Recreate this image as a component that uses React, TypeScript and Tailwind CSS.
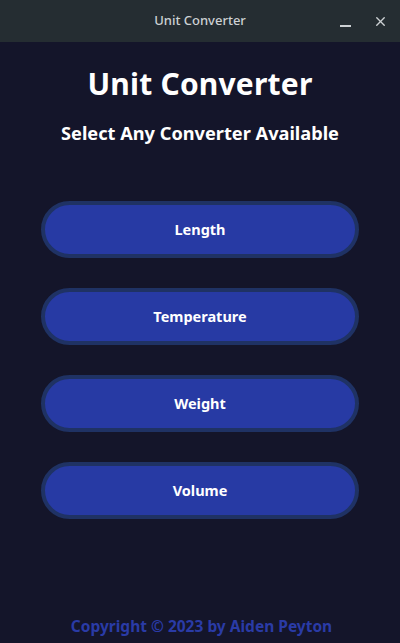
import { X } from "lucide-react";

const converters = ["Length", "Temperature", "Weight", "Volume"];

export default function App() {
  return (
    <div className="w-[400px] h-[643px] flex flex-col bg-[#14152a] font-['Noto_Sans',sans-serif] overflow-hidden">
      <div className="h-[42px] shrink-0 bg-[#252d32] flex items-center relative">
        <p className="w-full text-center text-[13px] text-[#cdd1d4] font-medium">Unit Converter</p>
        <div className="absolute right-[12px] top-0 h-full flex items-center gap-[22px]">
          <span className="block w-[11px] h-[2px] bg-[#cdd1d4] mt-[9px]" />
          <X size={15} strokeWidth={2.2} className="text-[#cdd1d4]" />
        </div>
      </div>

      <div className="flex-1 flex flex-col items-center">
        <h1 className="mt-[22px] text-[30px] leading-[40px] font-bold text-white tracking-[0.2px]">Unit Converter</h1>
        <h2 className="mt-[17px] text-[18.2px] leading-[24px] font-bold text-white">Select Any Converter Available</h2>

        <div className="mt-[56px] flex flex-col gap-[30px]">
          {converters.map((c) => (
            <button
              key={c}
              className="w-[318px] h-[57px] rounded-full border-[4px] border-[#1f3264] bg-[#273aa4] text-white text-[14.5px] font-bold"
            >
              {c}
            </button>
          ))}
        </div>

        <p className="mt-auto mb-[6px] ml-[3px] text-[15.5px] leading-[22px] font-bold text-[#2a3ba6]">Copyright © 2023 by Aiden Peyton</p>
      </div>
    </div>
  );
}
